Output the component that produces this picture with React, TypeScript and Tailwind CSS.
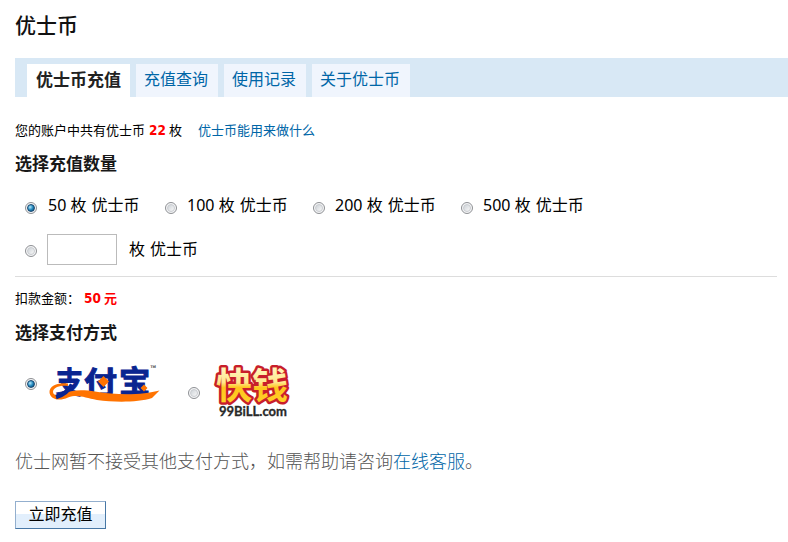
import React from "react";

const tabs = ["充值查询", "使用记录", "关于优士币"];
const amounts = [
  { value: "50", width: "w-[140px]" },
  { value: "100", width: "w-[148px]" },
  { value: "200", width: "w-[148px]" },
  { value: "500", width: "w-[148px]" },
];

function Radio({ checked = false }: { checked?: boolean }) {
  return (
    <span
      role="radio"
      aria-checked={checked}
      className="flex h-3 w-3 shrink-0 items-center justify-center rounded-full border border-[#8e9094] bg-[#f5f6f7]"
    >
      {checked ? (
        <span className="h-2 w-2 rounded-full border border-[#17466f] bg-radial-[at_35%_35%] from-[#b5e8fb] via-[#2489be] to-[#0b3a63]" />
      ) : (
        <span className="h-2 w-2 rounded-full border border-[#c9ccd0] bg-linear-to-br from-[#ced3d8] to-[#f8f8f8]" />
      )}
    </span>
  );
}

function AlipayLogo() {
  return (
    <svg width="112" height="40" viewBox="0 0 112 40" className="block shrink-0 overflow-visible font-['Noto_Sans_CJK_SC',sans-serif]">
      <g fill="#0a2590" stroke="#0a2590" strokeWidth="1" fontWeight="700">
        <text transform="translate(7 28.500) scale(0.87 0.95)" fontSize="31">支</text>
        <text transform="translate(35 28.500) scale(1.1 1)" fontSize="30">付</text>
        <text transform="translate(70 28) scale(1.06 1)" fontSize="29.500">宝</text>
      </g>
      <path d="M0.500 28C0.500 22 8 18 19 19.500L19 22C10 21 4 24 4 28C4 31.500 10 32.500 14 30C22 25.500 34 25.500 46 27.500C69 31.500 94 31 110.500 26.500L103 34C89 38.500 66 38.500 48 36C36 34 29 30 19 33.500C9 38 0.500 34.500 0.500 28Z" fill="#ff7300" />
      <path d="M23 20.500C20 26 15 31 7 33" fill="none" stroke="#0a2590" strokeWidth="4.500" />
      <path d="M54.500 12L60 17.500L54.500 23L49 17.500ZM95 20.500L98.500 24L95 27.500L91.500 24Z" fill="#ff7300" />
      <text x="101.500" y="6.500" fontSize="7" fontWeight="700" fill="#555">™</text>
    </svg>
  );
}

function BillLogo() {
  return (
    <svg width="78" height="56" viewBox="0 0 78 56" className="block shrink-0 overflow-visible font-['Noto_Sans_CJK_SC',sans-serif]">
      <defs>
        <linearGradient id="gold" x1="0" y1="0" x2="0" y2="1">
          <stop offset="0.25" stopColor="#fff5b8" />
          <stop offset="0.5" stopColor="#ffe78c" />
          <stop offset="0.6" stopColor="#ffc51c" />
          <stop offset="1" stopColor="#ffd52e" />
        </linearGradient>
      </defs>
      <text x="4" y="34.500" fontSize="36" fontWeight="700" fill="url(#gold)" stroke="#c81e2b" strokeWidth="5" strokeLinejoin="round" paintOrder="stroke">快钱</text>
      <text x="7" y="52" fontSize="13" fontWeight="700" fill="#292929" stroke="#292929" strokeWidth="0.3" textLength="68" lengthAdjust="spacingAndGlyphs" className="font-['Lato',sans-serif]">99BiLL.com</text>
    </svg>
  );
}

export default function App() {
  return (
    <main className="h-[542px] w-[788px] overflow-hidden bg-white pl-[15px] font-['Noto_Sans','Noto_Sans_CJK_SC',sans-serif] text-base text-black">
      <h1 className="flex h-[58px] items-start pt-2.5 text-[21px] leading-[30px] font-medium text-[#111]">优士币</h1>
      <nav className="flex h-[39px] items-end gap-1.5 bg-[#d8e8f5] pl-3">
        <a className="h-[33px] w-[103px] bg-white px-[9px] text-[17px] leading-[31px] font-bold text-[#222]">优士币充值</a>
        {tabs.map((tab) => (
          <a key={tab} className="h-[33px] bg-[#f0f5fd] pr-2.5 pl-2 leading-[31px] text-[#0066a7]">{tab}</a>
        ))}
      </nav>
      <p className="mt-[21px] flex h-6 items-center text-[13px] leading-6">
        <span className="w-[134px]">您的账户中共有优士币</span>
        <b className="w-5 font-['DejaVu_Sans_Condensed','DejaVu_Sans',sans-serif] text-[13.5px] text-[#f00]">22</b>
        <span className="w-[29px]">枚</span>
        <a className="text-[#0066a7]">优士币能用来做什么</a>
      </p>
      <h2 className="mt-2 h-7 text-[17px] leading-7 font-bold text-[#181818]">选择充值数量</h2>
      <div className="mt-3.5 flex h-[26px] items-center pl-2.5">
        {amounts.map(({ value, width }, index) => (
          <label key={value} className={`flex items-center ${width}`}>
            <span className="pt-1.5"><Radio checked={index === 0} /></span>
            <span className={`leading-[26px] whitespace-pre ${index === 0 ? "pl-[11px]" : "pl-[10px]"}`}>{value} 枚<span className="pl-[5px]">优士币</span></span>
          </label>
        ))}
      </div>
      <label className="mt-4 flex h-[31px] items-center pl-2.5">
        <span className="pt-[3px]"><Radio /></span>
        <input aria-label="充值数量" className="ml-2.5 h-[31px] w-[70px] border border-[#bbb] outline-none" />
        <span className="pb-0.5 pl-3">枚<span className="pl-[5px]">优士币</span></span>
      </label>
      <hr className="mt-[11px] w-[762px] border-[#ddd]" />
      <p className="mt-[9px] flex h-6 items-center text-[13px] leading-6">
        <span className="w-[69px]">扣款金额：</span>
        <b className="w-5 font-['DejaVu_Sans_Condensed','DejaVu_Sans',sans-serif] text-[13.5px] text-[#f00]">50</b>
        <b className="text-[#f00]">元</b>
      </p>
      <h2 className="mt-[9px] h-7 text-[17px] leading-7 font-bold text-[#181818]">选择支付方式</h2>
      <div className="mt-[17px] flex h-14 items-start pl-2.5">
        <label className="flex w-[163px] items-start gap-3">
          <span className="pt-3.5"><Radio checked /></span>
          <AlipayLogo />
        </label>
        <label className="flex items-start gap-3">
          <span className="pt-[23px]"><Radio /></span>
          <BillLogo />
        </label>
      </div>
      <p className="mt-[27px] h-7 text-[18px] leading-7 font-light text-[#555]">
        优士网暂不接受其他支付方式，如需帮助请咨询<a className="text-[#0066a7]">在线客服</a>。
      </p>
      <button className="mt-[26px] block h-7 w-[91px] border border-t-[#93afce] border-r-[#4777a5] border-b-[#4777a5] border-l-[#93afce] bg-linear-to-b from-white from-45% to-[#e2effc] to-45% pb-0.5 leading-6">
        立即充值
      </button>
    </main>
  );
}
